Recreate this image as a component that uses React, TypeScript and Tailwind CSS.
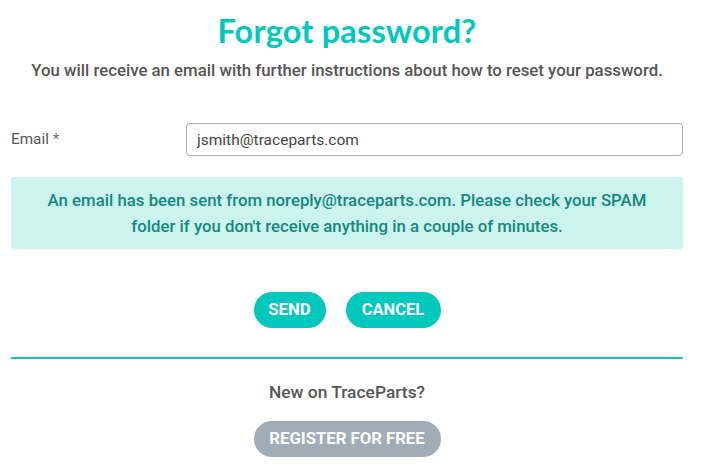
export default function App() {
  return (
    <div className="w-[709px] h-[465px] bg-white font-['Roboto',sans-serif] overflow-hidden">
      <div className="mx-[11px] w-[672px] pt-[11px]">
        <h1 className="text-center font-['Lato',sans-serif] font-bold text-[32.5px] leading-[40px] text-[#00c8bd] tracking-[0.2px]">
          Forgot password?
        </h1>
        <p className="mt-[9px] text-center text-[16.8px] leading-[20px] font-medium text-[#555555]">
          You will receive an email with further instructions about how to reset your password.
        </p>

        <div className="mt-[43px] flex items-center">
          <label className="w-[175px] text-[15.3px] text-[#555555]">
            Email <span className="text-[#777]">*</span>
          </label>
          <input
            className="flex-1 h-[33px] border border-[#a9b1ba] rounded-[4px] px-[10px] text-[15.5px] text-[#444] outline-none"
            defaultValue="jsmith@traceparts.com"
          />
        </div>

        <div className="mt-[21px] h-[72px] bg-[#cbf4ef] rounded-[3px] flex items-center justify-center px-[20px]">
          <p className="text-center text-[16.8px] leading-[26px] font-medium text-[#16877d]">
            An email has been sent from noreply@traceparts.com. Please check your SPAM
            <br />
            folder if you don't receive anything in a couple of minutes.
          </p>
        </div>

        <div className="mt-[43px] flex justify-center gap-[20px]">
          <button className="w-[72px] h-[36px] rounded-full bg-[#00c8bd] text-white font-bold text-[16.8px]">
            SEND
          </button>
          <button className="w-[95px] h-[36px] rounded-full bg-[#00c8bd] text-white font-bold text-[16.5px]">
            CANCEL
          </button>
        </div>

        <div className="mt-[29px] h-[2px] bg-[#16c4bb]" />

        <p className="mt-[21px] text-center text-[17.4px] leading-[24px] font-medium text-[#555555]">
          New on TraceParts?
        </p>

        <div className="mt-[17px] flex justify-center">
          <button className="w-[187px] h-[36px] rounded-full bg-[#a0acb6] text-white font-bold text-[16.7px]">
            REGISTER FOR FREE
          </button>
        </div>
      </div>
    </div>
  );
}
